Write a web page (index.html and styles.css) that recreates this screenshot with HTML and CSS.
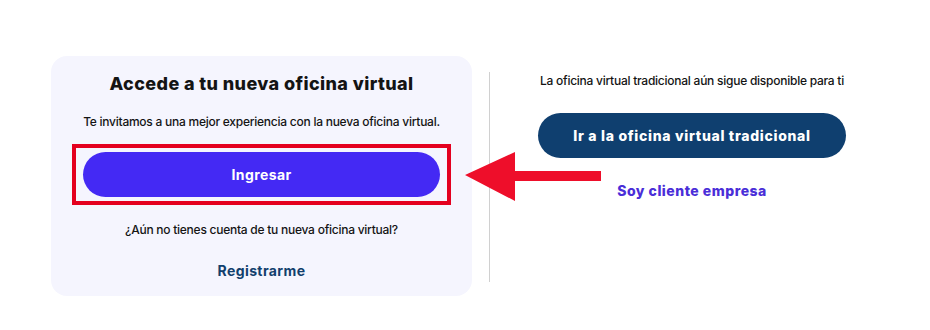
FILE: index.html
```html
<!DOCTYPE html>
<html lang="es">
<head>
<meta charset="utf-8">
<link rel="stylesheet" href="styles.css">
</head>
<body>
<div class="page">
  <section class="card">
    <h1 class="title">Accede a tu nueva oficina virtual</h1>
    <p class="subtitle">Te invitamos a una mejor experiencia con la nueva oficina virtual.</p>
    <div class="highlight">
      <button class="btn btn-primary">Ingresar</button>
    </div>
    <p class="question">¿Aún no tienes cuenta de tu nueva oficina virtual?</p>
    <a class="link link-dark">Registrarme</a>
  </section>
  <div class="divider"></div>
  <section class="side">
    <p class="side-text">La oficina virtual tradicional aún sigue disponible para ti</p>
    <button class="btn btn-navy">Ir a la oficina virtual tradicional</button>
    <a class="link link-purple">Soy cliente empresa</a>
  </section>
  <svg class="arrow" width="140" height="52" viewBox="0 0 140 52">
    <polygon points="0,23 50,0 50,19 136,19 136,29 50,29 50,49" fill="#ee0e2a"/>
  </svg>
</div>
</body>
</html>
```
FILE: styles.css
```css
* { box-sizing: border-box; }
html, body { margin: 0; padding: 0; background: #ffffff; }
body {
  font-family: "Inter", "Noto Sans", sans-serif;
  color: #141414;
  width: 930px;
  height: 330px;
  overflow: hidden;
}
.page {
  position: relative;
  display: flex;
  align-items: flex-start;
  padding: 56px 0 0 51px;
}
.card {
  width: 421px;
  height: 240px;
  background: #f5f5fe;
  border-radius: 16px;
  display: flex;
  flex-direction: column;
  align-items: center;
  padding-top: 16px;
}
.title {
  margin: 0;
  font-size: 18px;
  font-weight: 800;
  line-height: 24px;
  letter-spacing: 0.4px;
}
.subtitle {
  margin: 18px 0 0;
  font-size: 12px;
  font-weight: 500;
  line-height: 16px;
  letter-spacing: -0.25px;
}
.highlight {
  margin-top: 14px;
  width: 379px;
  height: 61px;
  border: 4px solid #e4001f;
  padding: 4px 7px;
}
.btn {
  border: none;
  border-radius: 23px;
  color: #ffffff;
  font-family: inherit;
  font-weight: 700;
  font-size: 14px;
  letter-spacing: 0.4px;
  display: flex;
  align-items: center;
  justify-content: center;
}
.btn-primary {
  width: 100%;
  height: 45px;
  background: #4429f4;
}
.question {
  margin: 17px 0 0;
  font-size: 12px;
  font-weight: 500;
  line-height: 16px;
  letter-spacing: -0.25px;
}
.link {
  font-weight: 700;
  font-size: 14px;
  letter-spacing: 0.4px;
  line-height: 18px;
}
.link-dark { margin-top: 24px; color: #123f6d; }
.divider {
  width: 1px;
  height: 210px;
  background: #d0d0d0;
  margin: 16px 0 0 17px;
}
.side {
  margin-left: 48px;
  width: 308px;
  display: flex;
  flex-direction: column;
  align-items: center;
  padding-top: 17px;
}
.side-text {
  margin: 0;
  font-size: 12px;
  font-weight: 500;
  line-height: 16px;
  letter-spacing: -0.25px;
  white-space: nowrap;
}
.btn-navy {
  margin-top: 24px;
  width: 308px;
  height: 45px;
  background: #0f3f6f;
  font-weight: 800;
  letter-spacing: 0.7px;
}
.link-purple { margin-top: 24px; color: #4a2ed8; font-weight: 800; letter-spacing: 0.5px; }
.arrow {
  position: absolute;
  left: 465px;
  top: 152px;
}
```
